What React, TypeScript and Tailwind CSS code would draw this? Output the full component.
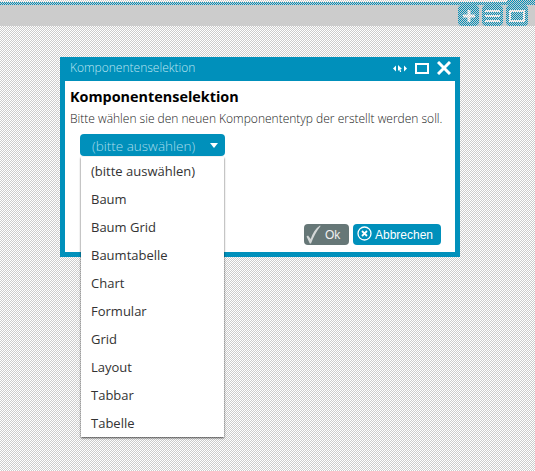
import React from 'react';

const OPTIONS = [
  '(bitte auswählen)',
  'Baum',
  'Baum Grid',
  'Baumtabelle',
  'Chart',
  'Formular',
  'Grid',
  'Layout',
  'Tabbar',
  'Tabelle',
];

const Toolbar = () => (
  <div className="relative mt-[2px] h-[24px] bg-[#cccccc] border-t-[3px] border-[#0090bb] flex justify-end gap-[3px] pr-[7px]">
    <button className="w-[21px] h-[21px] rounded-[4px] bg-[#0090bb] flex items-center justify-center">
      <svg width="14" height="14" viewBox="0 0 14 14" fill="white">
        <path d="M5.500 1h3v4.500H13v3H8.500V13h-3V8.500H1v-3h4.500z" />
      </svg>
    </button>
    <button className="w-[21px] h-[21px] rounded-[4px] bg-[#0090bb] flex items-center justify-center">
      <svg width="15" height="12" viewBox="0 0 15 12" fill="white">
        <rect x="0" y="0" width="15" height="2" />
        <rect x="0" y="5" width="15" height="2" />
        <rect x="0" y="10" width="15" height="2" />
      </svg>
    </button>
    <button className="w-[22px] h-[21px] rounded-[4px] bg-[#0090bb] flex items-center justify-center">
      <svg width="16" height="12" viewBox="0 0 16 12" fill="none" stroke="white" strokeWidth="2">
        <rect x="1" y="1" width="14" height="10" />
      </svg>
    </button>
  </div>
);

const Dialog = () => (
  <div className="absolute left-[60px] top-[57px] w-[400px] h-[200px] bg-[#0090bb] px-[5px] pb-[5px] flex flex-col">
    <div className="h-[24px] pb-[2px] flex items-center justify-between pl-[5px] pr-[4px] shrink-0">
      <span className="text-[12px] text-[#bfe6f2] font-light">Komponentenselektion</span>
      <div className="flex items-center">
        <svg width="14" height="7" viewBox="0 0 14 7" fill="white" className="mr-[8px]">
          <path d="M0 3.500l3-3v6zM14 3.500l-3-3v6zM5 0l4 4-1.600.2L8.200 7H7L6.200 4.800 5 6z" />
        </svg>
        <svg width="14" height="11" viewBox="0 0 14 11" fill="none" stroke="white" strokeWidth="2" className="mr-[8px]">
          <rect x="1" y="1" width="12" height="9" />
        </svg>
        <svg width="14" height="14" viewBox="0 0 14 14" fill="none" stroke="white" strokeWidth="3">
          <path d="M1 1l12 12M13 1L1 13" />
        </svg>
      </div>
    </div>
    <div className="flex-1 bg-white px-[5px] pt-[6px] relative">
      <h2 className="text-[14.400px] leading-[20px] font-bold text-black whitespace-nowrap">Komponentenselektion</h2>
      <p className="text-[12px] leading-[16px] mt-[4px] text-[#222222] font-light whitespace-nowrap">
        Bitte wählen sie den neuen Komponententyp der erstellt werden soll.
      </p>
      <div className="ml-[10px] mt-[7px] w-[145px] h-[22px] rounded-[4px] bg-[#0090bb] flex items-center justify-between pl-[12px] pr-[7px]">
        <span className="text-[13.500px] leading-[24px] pt-[1px] text-[#a8dcec] font-light whitespace-nowrap">(bitte auswählen)</span>
        <span className="w-0 h-0 border-x-[4.500px] border-x-transparent border-t-[5px] border-t-white" />
      </div>
      <div className="absolute right-[14px] bottom-[7px] flex gap-[4px]">
        <button className="h-[21px] w-[45px] rounded-[4px] bg-[#667777] flex items-center text-[#f0f0f0] text-[12px] font-['Liberation_Sans',sans-serif]">
          <svg width="16" height="19" viewBox="0 0 16 19" fill="#d4d8d8" className="ml-[1px] mr-[4px] -mt-[1px]">
            <path d="M1.500 11.500l1.500-1 2.700 3.500C7.500 8.500 10.500 3.500 15 .5l.6.5C11.500 6 8.500 12 6 18.500H4.800z" />
          </svg>
          Ok
        </button>
        <button className="h-[21px] w-[88px] rounded-[4px] bg-[#0090bb] flex items-center text-white text-[12px] font-['Liberation_Sans',sans-serif]">
          <svg width="15" height="15" viewBox="0 0 15 15" fill="none" stroke="white" className="ml-[4px] mr-[3px] -mt-[2px]">
            <circle cx="7.500" cy="7.500" r="6.500" strokeWidth="1.300" />
            <path d="M5 5l5 5M10 5l-5 5" strokeWidth="1.800" />
          </svg>
          Abbrechen
        </button>
      </div>
    </div>
  </div>
);

const Dropdown = () => (
  <ul className="absolute left-[81px] top-[157px] w-[143px] bg-white shadow-[0_1px_2px_rgba(0,0,0,0.7)] z-10">
    {OPTIONS.map((o) => (
      <li key={o} className="h-[28px] leading-[28px] pl-[10px] text-[13px] text-[#333333] whitespace-nowrap">
        {o}
      </li>
    ))}
  </ul>
);

export default function App() {
  return (
    <div className="relative w-[535px] h-[471px] overflow-hidden bg-white font-['Open_Sans',sans-serif]">
      <div className="absolute right-0 top-0 w-[28px] h-[3px] bg-[#0090bb]" />
      <Toolbar />
      <div className="absolute inset-0 bg-[repeating-conic-gradient(#cccccc_0_25%,transparent_0_50%)] bg-[length:2px_2px]" />
      <Dialog />
      <Dropdown />
    </div>
  );
}
